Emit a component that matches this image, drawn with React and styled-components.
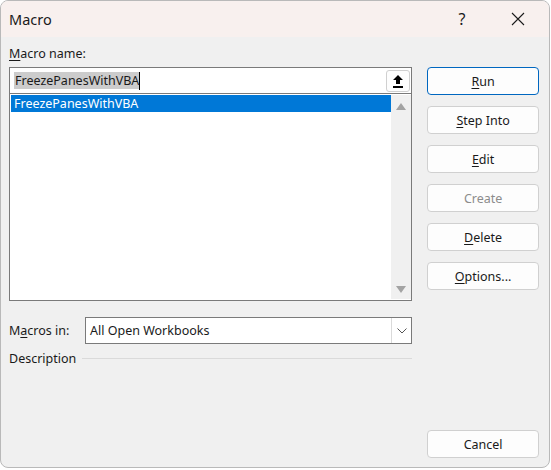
import React from 'react';
import styled, { createGlobalStyle } from 'styled-components';

const GlobalStyle = createGlobalStyle`
    html, body {
        margin: 0;
        padding: 0;
        background: #ffffff;
    }
    body {
        font-family: "Noto Sans", "Open Sans", sans-serif;
        font-size: 12.5px;
        color: #1a1a1a;
    }
`;

const Window = styled.div`
    width: 550px;
    height: 468px;
    box-sizing: border-box;
    border: 1px solid #b9b9b9;
    border-radius: 8px;
    overflow: hidden;
    background: #f0f0f0;
    display: flex;
    flex-direction: column;
`;

const TitleBar = styled.div`
    height: 36px;
    flex: none;
    background: #f8f0ee;
    display: flex;
    align-items: center;
    padding: 0 8px 0 8px;
    gap: 10px;
    font-size: 14.5px;
    color: #1b1b1b;

    .title {
        flex: 1;
    }
`;

const TitleButton = styled.div`
    width: 46px;
    height: 36px;
    display: flex;
    align-items: center;
    justify-content: center;
    font-size: 16px;
`;

const Body = styled.div`
    flex: 1;
    display: flex;
    padding: 0 10px 9px 8px;
    gap: 15px;
`;

const LeftColumn = styled.div`
    width: 404px;
    display: flex;
    flex-direction: column;
`;

const Label = styled.div`
    height: 30px;
    display: flex;
    align-items: center;
    padding-top: 4px;
    box-sizing: border-box;
    line-height: 1;
`;

const Key = styled.span`
    text-decoration: underline;
    text-underline-offset: 2px;
`;

const NameInput = styled.div`
    height: 26px;
    box-sizing: border-box;
    border: 1px solid #7a7a7a;
    border-bottom: none;
    background: #ffffff;
    display: flex;
    align-items: center;
    padding: 0 1px 0 4px;

    .value {
        flex: 1;
        display: flex;
        align-items: center;
    }

    .sel {
        background: #cccccc;
        padding: 0 0 0 1px;
        line-height: 17px;
    }

    .caret {
        width: 1px;
        height: 18px;
        background: #000;
    }
`;

const IconButton = styled.div`
    width: 24px;
    height: 22px;
    box-sizing: border-box;
    border: 1px solid #d0d0d0;
    border-radius: 3px;
    background: #fdfdfd;
    display: flex;
    align-items: center;
    justify-content: center;
`;

const ListBox = styled.div`
    height: 208px;
    box-sizing: border-box;
    border: 1px solid #7a7a7a;
    background: #ffffff;
    display: flex;
    padding: 1px 0 1px 1px;
`;

const Items = styled.div`
    flex: 1;
`;

const Item = styled.div`
    height: 17px;
    display: flex;
    align-items: center;
    padding-left: 3px;
    background: ${(p) => (p.$selected ? '#0078d7' : 'transparent')};
    color: ${(p) => (p.$selected ? '#ffffff' : '#1a1a1a')};
`;

const ScrollBar = styled.div`
    width: 20px;
    background: #f0f0f0;
    display: flex;
    flex-direction: column;
    justify-content: space-between;
    align-items: center;
    padding: 8px 0 6px;
`;

const Arrow = styled.div`
    width: 0;
    height: 0;
    border-left: 5px solid transparent;
    border-right: 5px solid transparent;
    ${(p) => (p.$down ? 'border-top' : 'border-bottom')}: 7px solid #a3a3a3;
`;

const MacrosInRow = styled.div`
    margin-top: 16px;
    display: flex;
    align-items: center;

    .label {
        width: 76px;
    }
`;

const Select = styled.div`
    flex: 1;
    height: 27px;
    box-sizing: border-box;
    border: 1px solid #7a7a7a;
    background: #ffffff;
    display: flex;
    align-items: center;

    .value {
        flex: 1;
        padding-left: 4px;
    }

    .drop {
        width: 20px;
        height: 25px;
        box-sizing: border-box;
        border-left: 1px solid #dadada;
        display: flex;
        align-items: center;
        justify-content: center;
    }
`;

const DescriptionRow = styled.div`
    margin-top: 6px;
    display: flex;
    align-items: center;
    gap: 6px;

    .line {
        flex: 1;
        height: 1px;
        background: #dadada;
    }
`;

const RightColumn = styled.div`
    width: 112px;
    display: flex;
    flex-direction: column;
    padding-top: 30px;
    gap: 11px;
`;

const Button = styled.div`
    height: 28px;
    box-sizing: border-box;
    border: 1px solid ${(p) => (p.$default ? '#0067c0' : '#d0d0d0')};
    border-radius: 4px;
    background: #fdfdfd;
    display: flex;
    align-items: center;
    justify-content: center;
    color: ${(p) => (p.$disabled ? '#8c8c8c' : '#1a1a1a')};
    margin-top: ${(p) => (p.$push ? 'auto' : '0')};
`;

const buttons = [
    { key: 'R', rest: 'un', def: true },
    { key: 'S', rest: 'tep Into' },
    { key: 'E', rest: 'dit' },
    { key: '', rest: 'Create', disabled: true },
    { key: 'D', rest: 'elete' },
    { key: 'O', rest: 'ptions...' },
];

const App = () => (
    <>
        <GlobalStyle />
        <Window>
            <TitleBar>
                <div className="title">Macro</div>
                <TitleButton>?</TitleButton>
                <TitleButton>
                    <svg width="14" height="14" viewBox="0 0 14 14">
                        <path d="M1 1 L13 13 M13 1 L1 13" stroke="#1b1b1b" strokeWidth="1.1" fill="none" />
                    </svg>
                </TitleButton>
            </TitleBar>
            <Body>
                <LeftColumn>
                    <Label>
                        <span>
                            <Key>M</Key>acro name:
                        </span>
                    </Label>
                    <NameInput>
                        <div className="value">
                            <span className="sel">FreezePanesWithVBA</span>
                            <span className="caret" />
                        </div>
                        <IconButton>
                            <svg width="12" height="14" viewBox="0 0 12 14">
                                <path d="M6 1 L11 6 L8 6 L8 10 L4 10 L4 6 L1 6 Z" fill="#000" />
                                <rect x="1" y="12" width="10" height="2" fill="#000" />
                            </svg>
                        </IconButton>
                    </NameInput>
                    <ListBox>
                        <Items>
                            <Item $selected>FreezePanesWithVBA</Item>
                        </Items>
                        <ScrollBar>
                            <Arrow />
                            <Arrow $down />
                        </ScrollBar>
                    </ListBox>
                    <MacrosInRow>
                        <div className="label">
                            M<Key>a</Key>cros in:
                        </div>
                        <Select>
                            <div className="value">All Open Workbooks</div>
                            <div className="drop">
                                <svg width="10" height="6" viewBox="0 0 10 6">
                                    <path d="M0.5 0.5 L5 5 L9.5 0.5" stroke="#555" strokeWidth="1" fill="none" />
                                </svg>
                            </div>
                        </Select>
                    </MacrosInRow>
                    <DescriptionRow>
                        <span>Description</span>
                        <div className="line" />
                    </DescriptionRow>
                </LeftColumn>
                <RightColumn>
                    {buttons.map((b) => (
                        <Button key={b.rest} $default={b.def} $disabled={b.disabled}>
                            <span>
                                {b.key && <Key>{b.key}</Key>}
                                {b.rest}
                            </span>
                        </Button>
                    ))}
                    <Button $push>Cancel</Button>
                </RightColumn>
            </Body>
        </Window>
    </>
);

export default App;
